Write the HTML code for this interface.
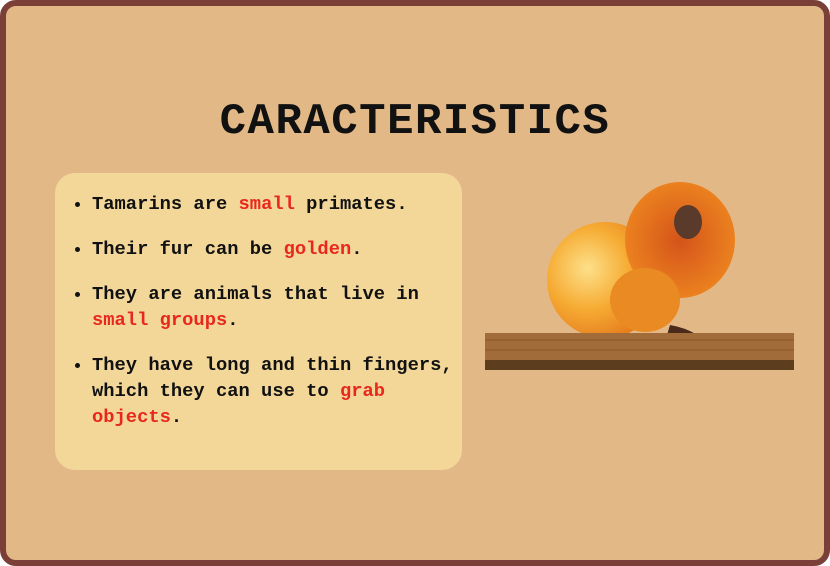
<!DOCTYPE html>
<html><head><style>
body{margin:0;width:830px;height:566px;overflow:hidden;background:#fff}
.frame{position:absolute;left:0;top:0;width:818px;height:554px;border:6px solid #7a4038;border-radius:16px;background:#e2b887}
h1{position:absolute;left:0;top:97px;width:830px;margin:0;text-align:center;font:bold 44px "Liberation Mono",monospace;letter-spacing:1.5px;color:#111}
.box{position:absolute;left:55px;top:173px;width:407px;height:297px;background:#f2d799;border-radius:20px}
ul{margin:0;padding:0 0 0 37px;position:absolute;top:18px;left:0;width:345px;font:bold 18.8px/26px "Liberation Mono",monospace;color:#111}
li{margin-bottom:19px}
.r{color:#e8281f}
</style></head><body>
<div class="frame"></div>
<h1>CARACTERISTICS</h1>
<div class="box"><ul>
<li>Tamarins are <span class="r">small</span> primates.</li>
<li>Their fur can be <span class="r">golden</span>.</li>
<li>They are animals that live in <span class="r">small groups</span>.</li>
<li style="margin-right:-30px">They have long and thin fingers, which they can use to <span class="r">grab objects</span>.</li>
</ul></div>
<svg style="position:absolute;left:0;top:0" width="830" height="566">
<defs><radialGradient id="g" cx="0.35" cy="0.4" r="0.7"><stop offset="0" stop-color="#fde08a"/><stop offset="0.5" stop-color="#f6ac34"/><stop offset="1" stop-color="#e2761a"/></radialGradient>
<radialGradient id="m" cx="0.5" cy="0.5" r="0.6"><stop offset="0" stop-color="#d4541a"/><stop offset="1" stop-color="#f08a20"/></radialGradient></defs>
<ellipse cx="605" cy="280" rx="58" ry="58" fill="url(#g)"/>
<ellipse cx="680" cy="240" rx="55" ry="58" fill="url(#m)"/>
<ellipse cx="645" cy="300" rx="35" ry="32" fill="#ea8a22"/>
<ellipse cx="688" cy="222" rx="14" ry="17" fill="#5a3a2a"/>
<path d="M670 325 q30 5 50 30 l-8 5 q-20-20-45-25z" fill="#4a2a1a"/>
<rect x="485" y="333" width="309" height="30" fill="#a26b3a"/>
<rect x="485" y="360" width="309" height="10" fill="#5c3e1e"/>
<path d="M485 340 h309 M485 350 h309" stroke="#8a5628" stroke-width="1"/>
</svg>
</body></html>
